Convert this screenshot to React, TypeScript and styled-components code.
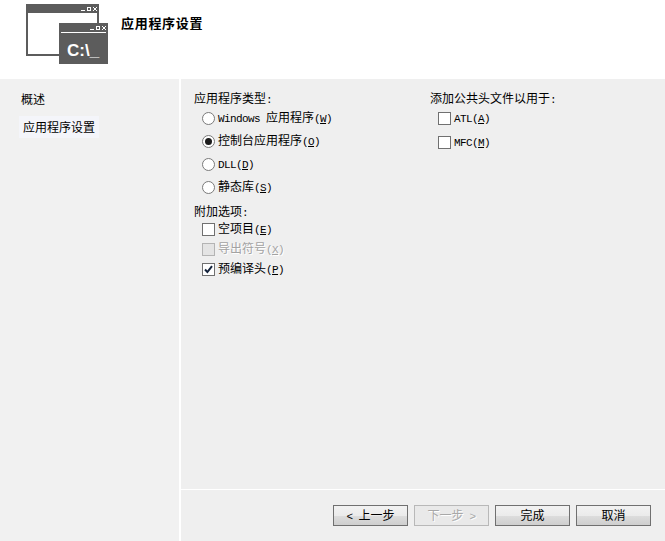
import React from "react";
import styled, { createGlobalStyle } from "styled-components";

const GlobalStyle = createGlobalStyle`
  html, body {
    margin: 0;
    padding: 0;
    background: #ffffff;
  }
  body {
    font-family: "Noto Sans CJK SC", sans-serif;
    font-size: 12px;
    color: #000000;
  }
`;

const Wizard = styled.div`
  width: 665px;
  height: 541px;
  display: flex;
  flex-direction: column;
  overflow: hidden;
`;

const Header = styled.header`
  height: 79px;
  flex: none;
  display: flex;
  align-items: flex-start;
  background: #ffffff;
  padding-left: 26px;
  box-sizing: border-box;
`;

const HeaderIcon = styled.svg`
  width: 84px;
  height: 62px;
  margin-top: 4px;
  flex: none;
`;

const HeaderTitle = styled.h1`
  margin: 15px 0 0 11px;
  font-family: "Noto Sans CJK SC", sans-serif;
  font-size: 13px;
  letter-spacing: 0.7px;
  line-height: 16px;
  font-weight: 700;
`;

const Body = styled.div`
  flex: 1;
  display: flex;
  min-height: 0;
`;

const Sidebar = styled.nav`
  width: 160px;
  flex: none;
  background: #f1f1f1;
  border-right: 2px solid #ffffff;
  padding: 9px 0 0 19px;
  display: flex;
  flex-direction: column;
  align-items: flex-start;
`;

const NavItem = styled.div<{ $active?: boolean }>`
  line-height: 16px;
  height: 22px;
  display: flex;
  align-items: center;
  margin-top: ${(p) => (p.$active ? "6px" : "0")};
  padding: ${(p) => (p.$active ? "0 4px" : "0 0 0 2px")};
  background: ${(p) => (p.$active ? "#f4f5fa" : "transparent")};
`;

const Main = styled.main`
  flex: 1;
  display: flex;
  flex-direction: column;
  background: #efefef;
`;

const Options = styled.div`
  flex: 1;
  display: flex;
  padding: 11px 0 0 13px;
`;

const LeftColumn = styled.div`
  width: 236px;
  flex: none;
  display: flex;
  flex-direction: column;
`;

const RightColumn = styled.div`
  display: flex;
  flex-direction: column;
`;

const GroupTitle = styled.div<{ $top?: number }>`
  height: 16px;
  line-height: 16px;
  margin-top: ${(p) => p.$top ?? 0}px;
`;

const OptionList = styled.div<{ $gap: number; $top: number }>`
  display: flex;
  flex-direction: column;
  gap: ${(p) => p.$gap}px;
  margin: ${(p) => p.$top}px 0 0 8px;
`;

const OptionRow = styled.label<{ $disabled?: boolean }>`
  display: flex;
  align-items: center;
  gap: 3px;
  height: 16px;
  line-height: 16px;
  color: ${(p) => (p.$disabled ? "#a3a3a3" : "#000000")};
  text-shadow: ${(p) => (p.$disabled ? "1px 1px 0 #ffffff" : "none")};
`;

const RadioMark = styled.span<{ $checked?: boolean }>`
  width: 13px;
  height: 13px;
  flex: none;
  box-sizing: border-box;
  border: 1px solid #7a7a7a;
  border-radius: 50%;
  background: #ffffff;
  display: flex;
  align-items: center;
  justify-content: center;
  &::after {
    content: "";
    display: ${(p) => (p.$checked ? "block" : "none")};
    width: 7px;
    height: 7px;
    border-radius: 50%;
    background: #1c1c1c;
  }
`;

const CheckMark = styled.span<{ $disabled?: boolean }>`
  width: 13px;
  height: 13px;
  flex: none;
  box-sizing: border-box;
  border: 1px solid ${(p) => (p.$disabled ? "#b4b4b4" : "#707070")};
  background: ${(p) => (p.$disabled ? "#e4e4e4" : "#ffffff")};
  display: flex;
  align-items: center;
  justify-content: center;
`;

const Latin = styled.span`
  font-family: "Liberation Mono", monospace;
  font-size: 11px;
  letter-spacing: -0.6px;
`;

const Key = styled.span`
  text-decoration: underline;
`;

const Footer = styled.footer`
  height: 52px;
  flex: none;
  box-sizing: border-box;
  border-top: 1px solid #ffffff;
  display: flex;
  justify-content: flex-end;
  gap: 6px;
  padding: 15px 14px 0 0;
`;

const Button = styled.button<{ $disabled?: boolean }>`
  width: 75px;
  height: 21px;
  padding: 0 0 2px;
  box-sizing: border-box;
  border: 1px solid ${(p) => (p.$disabled ? "#b8b8b8" : "#707070")};
  border-radius: 0;
  background: ${(p) =>
    p.$disabled
      ? "#e9e9e9"
      : "linear-gradient(#f2f2f2, #ebebeb 50%, #dddddd 51%, #cfcfcf)"};
  color: ${(p) => (p.$disabled ? "#a8a8a8" : "#000000")};
  text-shadow: ${(p) => (p.$disabled ? "1px 1px 0 #ffffff" : "none")};
  font-family: "Noto Sans CJK SC", sans-serif;
  font-size: 12px;
  line-height: 17px;
`;

type Option = { label: string; hot: string; prefix?: string; checked?: boolean; disabled?: boolean };

const appTypes: Option[] = [
  { prefix: "Windows ", label: "应用程序", hot: "W" },
  { label: "控制台应用程序", hot: "O", checked: true },
  { prefix: "DLL", label: "", hot: "D" },
  { label: "静态库", hot: "S" },
];

const extras: Option[] = [
  { label: "空项目", hot: "E" },
  { label: "导出符号", hot: "X", disabled: true },
  { label: "预编译头", hot: "P", checked: true },
];

const headers: Option[] = [
  { prefix: "ATL", label: "", hot: "A" },
  { prefix: "MFC", label: "", hot: "M" },
];

const OptionText = ({ prefix, label, hot }: Option) => (
  <span>
    {prefix && <Latin>{prefix}</Latin>}
    {label}
    <Latin>
      (<Key>{hot}</Key>)
    </Latin>
  </span>
);

const Tick = () => (
  <svg width="9" height="9" viewBox="0 0 9 9">
    <path d="M1 4.5 L3.4 7 L8 1.2" fill="none" stroke="#14233c" strokeWidth="2" />
  </svg>
);

const WindowControls = ({ x, y }: { x: number; y: number }) => (
  <g fill="#ffffff" transform={`translate(${x} ${y})`}>
    <rect x="0" y="3" width="4" height="1" />
    <rect x="6.5" y="0.5" width="3" height="3" fill="none" stroke="#ffffff" />
    <path d="M12 0 L16 4 M16 0 L12 4" stroke="#ffffff" strokeWidth="1" />
  </g>
);

const ConsoleIcon = () => (
  <HeaderIcon viewBox="0 0 84 62">
    <rect x="1" y="1" width="71" height="50" fill="#ffffff" stroke="#5c5c5c" strokeWidth="2" />
    <rect x="0" y="0" width="73" height="9" fill="#5c5c5c" />
    <WindowControls x={55} y={3} />
    <rect x="33" y="19" width="49" height="41" fill="#5c5c5c" />
    <WindowControls x={64} y={22} />
    <rect x="35" y="28" width="45" height="1" fill="#ffffff" />
    <text
      x="41"
      y="52"
      fill="#ffffff"
      fontFamily="'Liberation Sans', sans-serif"
      fontSize="17"
      fontWeight="700"
    >
      C:\_
    </text>
  </HeaderIcon>
);

export default function App() {
  return (
    <Wizard>
      <GlobalStyle />
      <Header>
        <ConsoleIcon />
        <HeaderTitle>应用程序设置</HeaderTitle>
      </Header>
      <Body>
        <Sidebar>
          <NavItem>概述</NavItem>
          <NavItem $active>应用程序设置</NavItem>
        </Sidebar>
        <Main>
          <Options>
            <LeftColumn>
              <GroupTitle>
                应用程序类型<Latin>:</Latin>
              </GroupTitle>
              <OptionList $gap={7} $top={4}>
                {appTypes.map((o) => (
                  <OptionRow key={o.hot}>
                    <RadioMark $checked={o.checked} />
                    <OptionText {...o} />
                  </OptionRow>
                ))}
              </OptionList>
              <GroupTitle $top={8}>
                附加选项<Latin>:</Latin>
              </GroupTitle>
              <OptionList $gap={4} $top={2}>
                {extras.map((o) => (
                  <OptionRow key={o.hot} $disabled={o.disabled}>
                    <CheckMark $disabled={o.disabled}>{o.checked && <Tick />}</CheckMark>
                    <OptionText {...o} />
                  </OptionRow>
                ))}
              </OptionList>
            </LeftColumn>
            <RightColumn>
              <GroupTitle>
                添加公共头文件以用于<Latin>:</Latin>
              </GroupTitle>
              <OptionList $gap={8} $top={4}>
                {headers.map((o) => (
                  <OptionRow key={o.hot}>
                    <CheckMark />
                    <OptionText {...o} />
                  </OptionRow>
                ))}
              </OptionList>
            </RightColumn>
          </Options>
          <Footer>
            <Button>
              <Latin>&lt; </Latin>上一步
            </Button>
            <Button $disabled>
              下一步<Latin> &gt;</Latin>
            </Button>
            <Button>完成</Button>
            <Button>取消</Button>
          </Footer>
        </Main>
      </Body>
    </Wizard>
  );
}
